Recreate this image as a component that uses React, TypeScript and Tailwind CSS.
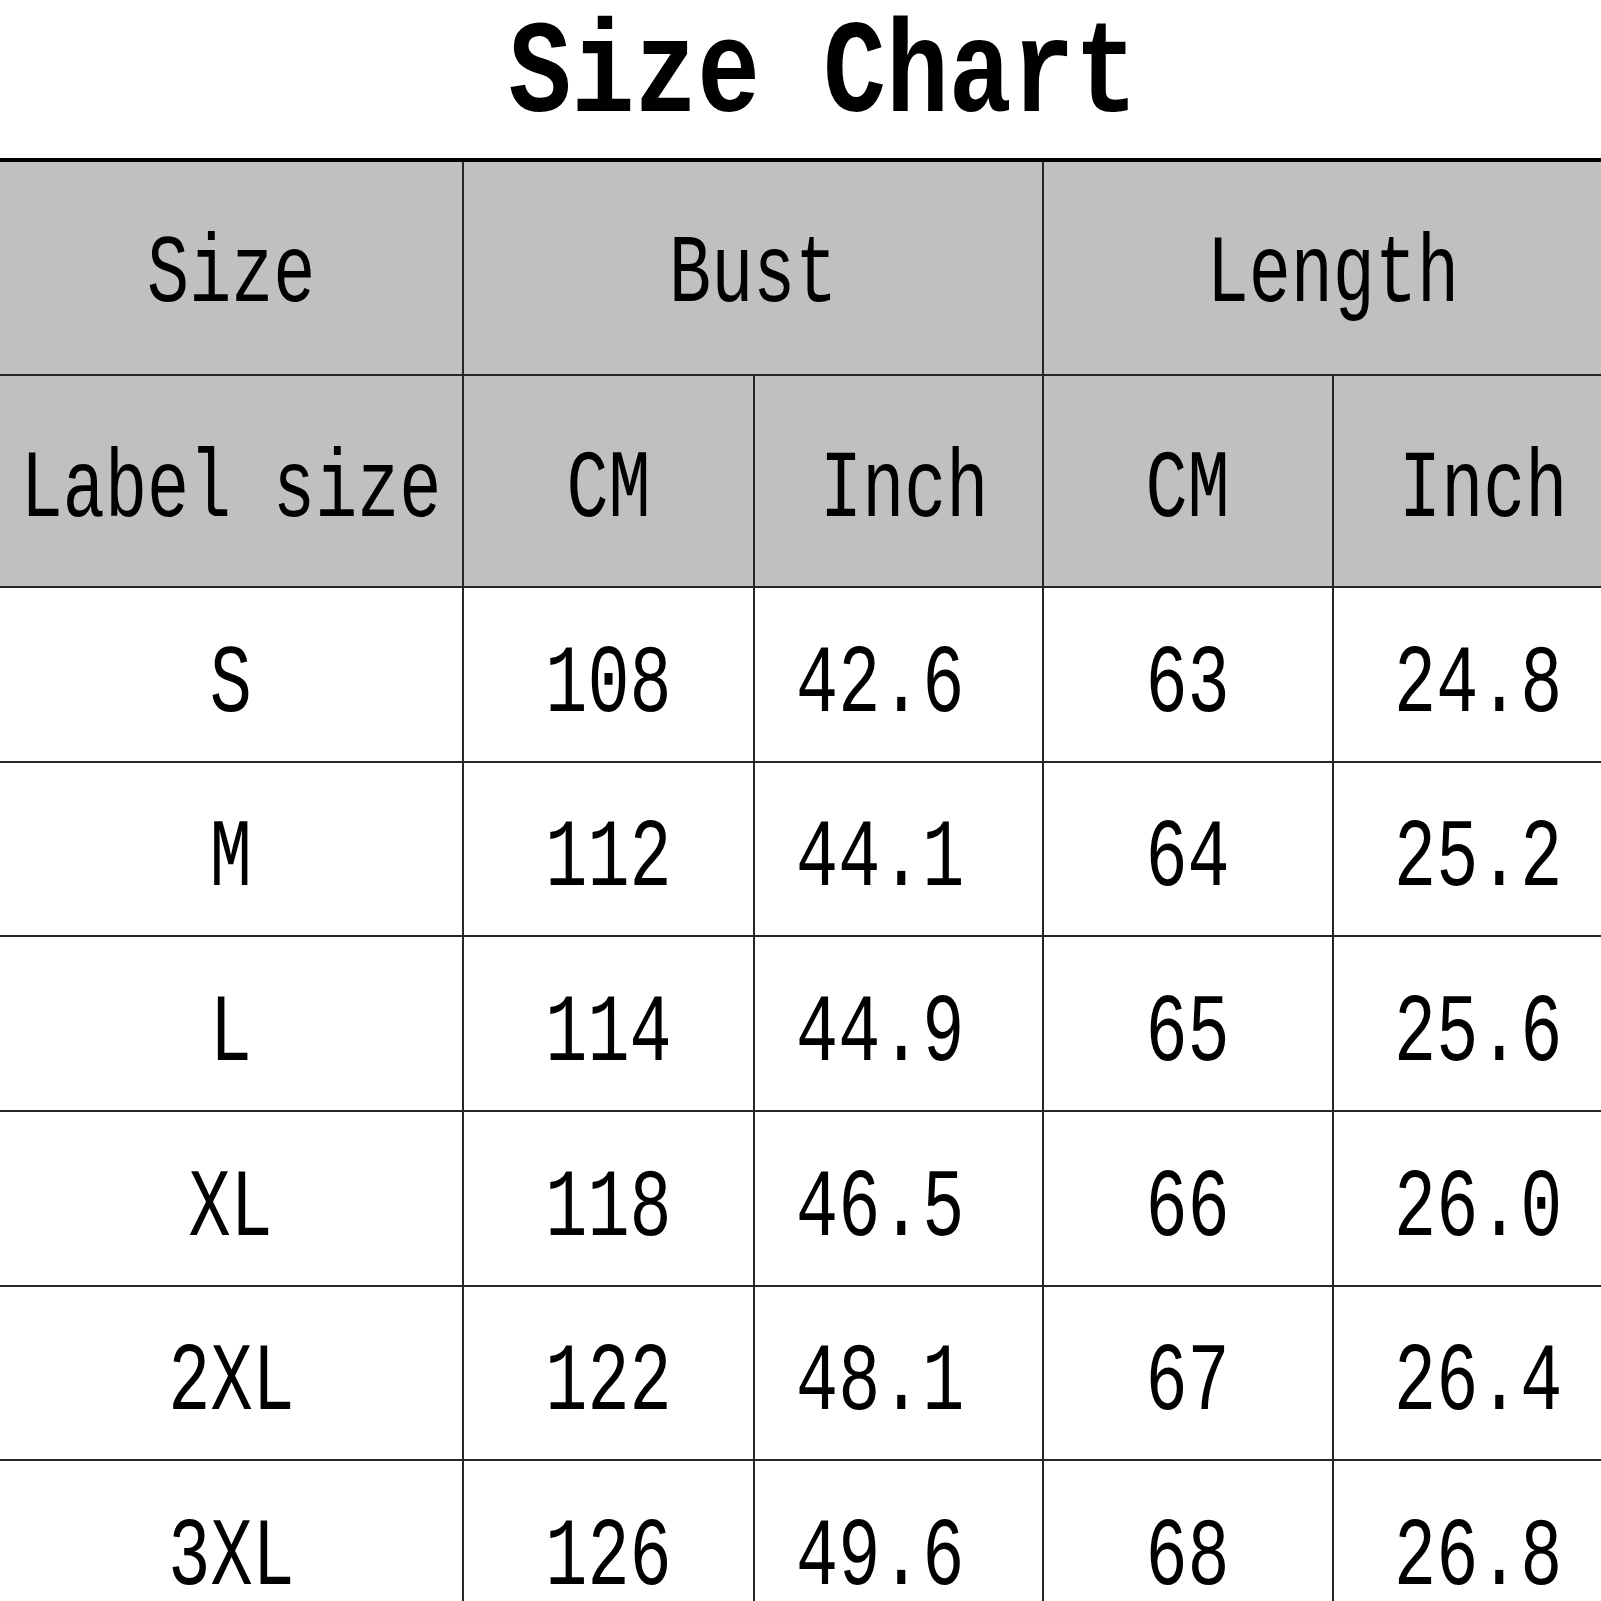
const rows = [
  ['S', '108', '42.6', '63', '24.8'],
  ['M', '112', '44.1', '64', '25.2'],
  ['L', '114', '44.9', '65', '25.6'],
  ['XL', '118', '46.5', '66', '26.0'],
  ['2XL', '122', '48.1', '67', '26.4'],
  ['3XL', '126', '49.6', '68', '26.8'],
]

function Txt({ children }: { children: React.ReactNode }) {
  return (
    <span className="inline-block scale-x-[0.73] whitespace-pre leading-none text-[96px]">
      {children}
    </span>
  )
}

export default function App() {
  return (
    <div
      className="w-[1601px] h-[1601px] overflow-hidden bg-white text-black"
      style={{ fontFamily: '"Liberation Mono", "DejaVu Sans Mono", monospace' }}
    >
      <div className="h-[158px] flex justify-center pl-[46px]">
        <h1 className="mt-[11px] inline-block scale-x-[0.8] text-[131px] leading-none font-bold whitespace-pre">
          Size Chart
        </h1>
      </div>

      <div className="grid w-[1623px] grid-cols-[462px_289px_287px_288px_288px] grid-rows-[212px_210px_173px_172px_173px_173px_172px_174px] gap-[2px] bg-[#262626] border-t-4 border-black">
        <div className="bg-[#c0c0c0] flex items-center justify-center pt-[16px]"><Txt>Size</Txt></div>
        <div className="col-span-2 bg-[#c0c0c0] flex items-center justify-center pt-[16px]"><Txt>Bust</Txt></div>
        <div className="col-span-2 bg-[#c0c0c0] flex items-center justify-center pt-[16px]"><Txt>Length</Txt></div>

        <div className="bg-[#c0c0c0] flex items-center justify-center pt-[20px]"><Txt>Label size</Txt></div>
        <div className="bg-[#c0c0c0] flex items-center justify-center pt-[20px]"><Txt>CM</Txt></div>
        <div className="bg-[#c0c0c0] flex items-center justify-center pt-[20px] pl-[12px]"><Txt>Inch</Txt></div>
        <div className="bg-[#c0c0c0] flex items-center justify-center pt-[20px]"><Txt>CM</Txt></div>
        <div className="bg-[#c0c0c0] flex items-center justify-center pt-[20px] pl-[10px]"><Txt>Inch</Txt></div>

        {rows.map((r) =>
          r.map((v, i) => (
            <div
              key={r[0] + i}
              className={
                i === 2
                  ? 'bg-white flex items-center justify-center pt-[22px] pr-[36px]'
                  : 'bg-white flex items-center justify-center pt-[22px]'
              }
            >
              <Txt>{v}</Txt>
            </div>
          ))
        )}
      </div>
    </div>
  )
}
